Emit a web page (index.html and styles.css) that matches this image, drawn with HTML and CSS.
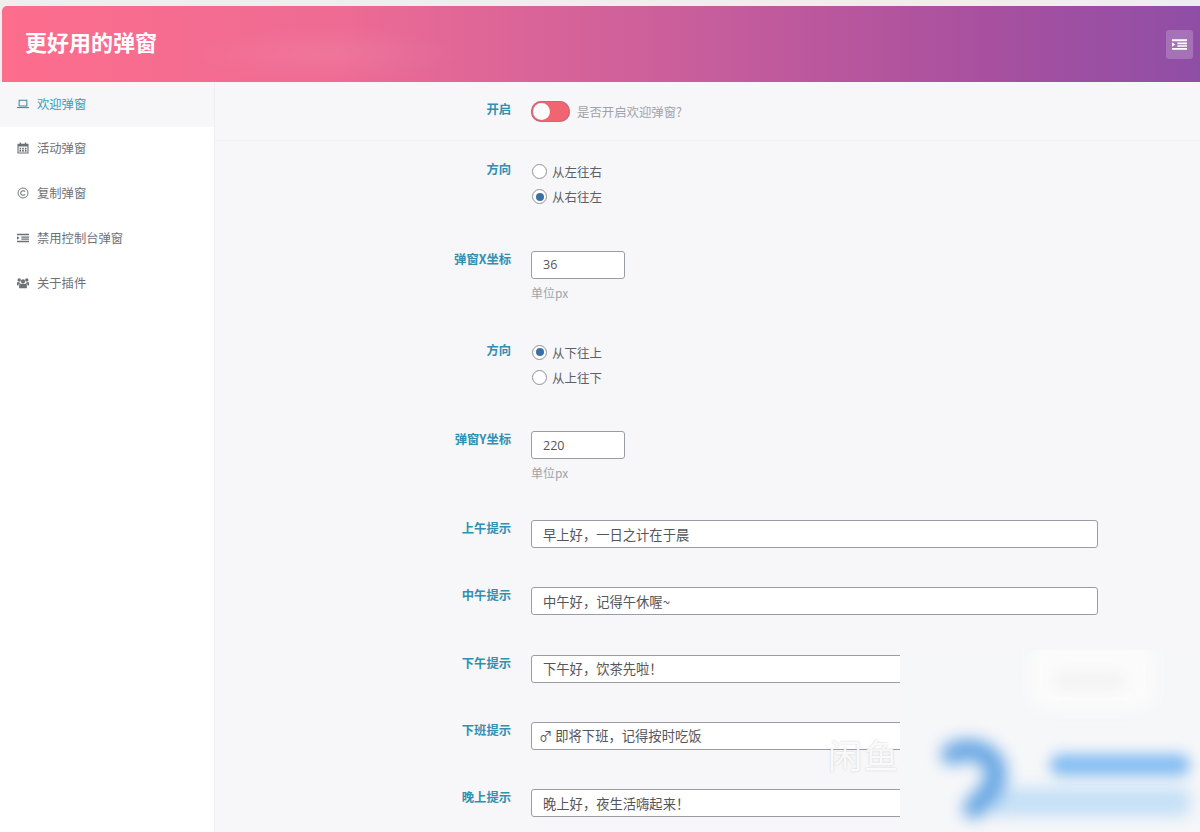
FILE: index.html
```html
<!DOCTYPE html>
<html lang="zh-CN">
<head>
<meta charset="utf-8">
<title>更好用的弹窗</title>
<link rel="stylesheet" href="styles.css">
</head>
<body>
<div class="app">
  <header class="header">
    <div class="header-glow"></div>
    <h1 class="title">更好用的弹窗</h1>
    <button class="menu-btn" aria-label="菜单">
      <svg viewBox="0 0 14 10" width="15" height="11"><path fill="#fff" d="M0 0h14v2H0zM5 3.200h9v1.500H5zM5 5.600h9v1.500H5zM0 8.200h14V10H0zM0 3l3 2-3 2z"/></svg>
    </button>
  </header>
  <div class="body">
    <nav class="sidebar">
      <a class="nav-item active">
        <svg class="nav-icon" viewBox="0 0 14 12"><path fill="none" stroke="currentColor" stroke-width="1.2" d="M2.500 1.600h9v6.800h-9z"/><path fill="currentColor" d="M0 9.600h14v1.200H0z"/></svg>
        <span>欢迎弹窗</span>
      </a>
      <a class="nav-item">
        <svg class="nav-icon" viewBox="0 0 13 13"><path fill="currentColor" fill-rule="evenodd" d="M.5 2H3V.5h1.500V2h4V.5H10V2h2.500v10.500H.5zM1.700 5v6.300h9.600V5zM2.700 6.200h1.800v1.800H2.700zM5.600 6.200h1.800v1.800H5.600zM8.500 6.200h1.800v1.800H8.500zM2.700 8.800h1.800v1.800H2.700zM5.600 8.800h1.800v1.800H5.600zM8.500 8.800h1.800v1.800H8.500z"/></svg>
        <span>活动弹窗</span>
      </a>
      <a class="nav-item">
        <svg class="nav-icon" viewBox="0 0 14 14"><circle cx="7" cy="7" r="5.800" fill="none" stroke="currentColor" stroke-width="1.100"/><path fill="none" stroke="currentColor" stroke-width="1.200" d="M9.200 5.400A2.700 2.700 0 1 0 9.200 8.600"/></svg>
        <span>复制弹窗</span>
      </a>
      <a class="nav-item">
        <svg class="nav-icon" viewBox="0 0 14 10"><path fill="currentColor" d="M0 0h14v1.800H0zM5 3.200h9v1.500H5zM5 5.600h9v1.500H5zM0 8.200h14V10H0zM0 3l3 2-3 2z"/></svg>
        <span>禁用控制台弹窗</span>
      </a>
      <a class="nav-item">
        <svg class="nav-icon" viewBox="0 0 14 12"><path fill="currentColor" d="M7 1.500a2.500 2.500 0 1 1 0 5a2.500 2.500 0 0 1 0-5zM2.600 .6a2 2 0 1 1 0 4a2 2 0 0 1 0-4zM11.400 .6a2 2 0 1 1 0 4a2 2 0 0 1 0-4zM3.800 6.800h6.400c.9 0 1.300.7 1.300 1.600V12h-9V8.400c0-.9.400-1.600 1.300-1.600zM0 5h2.800c.3.800.5 1.200 1 1.500C2.400 6.800 1.500 7.500 1.500 9H0zM11.200 5H14v4h-1.500c0-1.500-.9-2.200-2.300-2.500c.5-.3.700-.7 1-1.500z"/></svg>
        <span>关于插件</span>
      </a>
    </nav>
    <main class="main">
      <div class="row row-switch">
        <label class="label">开启</label>
        <div class="switch-wrap">
          <span class="switch"><span class="knob"></span></span>
          <span class="hint-inline">是否开启欢迎弹窗?</span>
        </div>
      </div>
      <div class="form">
        <div class="row">
          <label class="label label-radio">方向</label>
          <div class="radios">
            <div class="radio"><span class="dot"></span>从左往右</div>
            <div class="radio"><span class="dot checked"></span>从右往左</div>
          </div>
        </div>
        <div class="row">
          <label class="label">弹窗X坐标</label>
          <div>
            <input class="input input-short" value="36">
            <p class="help">单位px</p>
          </div>
        </div>
        <div class="row">
          <label class="label label-radio">方向</label>
          <div class="radios">
            <div class="radio"><span class="dot checked"></span>从下往上</div>
            <div class="radio"><span class="dot"></span>从上往下</div>
          </div>
        </div>
        <div class="row">
          <label class="label">弹窗Y坐标</label>
          <div>
            <input class="input input-short" value="220">
            <p class="help">单位px</p>
          </div>
        </div>
        <div class="row">
          <label class="label">上午提示</label>
          <input class="input input-long" value="早上好，一日之计在于晨">
        </div>
        <div class="row">
          <label class="label">中午提示</label>
          <input class="input input-long" value="中午好，记得午休喔~">
        </div>
        <div class="row">
          <label class="label">下午提示</label>
          <input class="input input-long" value="下午好，饮茶先啦！">
        </div>
        <div class="row">
          <label class="label">下班提示</label>
          <input class="input input-long input-emoji" value="♂ 即将下班，记得按时吃饭">
        </div>
        <div class="row">
          <label class="label">晚上提示</label>
          <input class="input input-long" value="晚上好，夜生活嗨起来！">
        </div>
      </div>
    </main>
  </div>
  <div class="mark-text">闲鱼</div>
  <div class="patch">
    <div class="blob-white"></div>
    <div class="blob-grey"></div>
    <div class="blob-sub"></div>
    <svg class="blob-logo" viewBox="0 0 80 84" width="80" height="84"><path fill="none" stroke="#5a9fe2" stroke-width="22" stroke-linecap="round" d="M14 16C34 6 58 16 58 36C58 50 46 60 36 70"/></svg>
    <div class="blob-bar"></div>
  </div>
</div>
</body>
</html>
```
FILE: styles.css
```css
* { box-sizing: border-box; }
html, body { margin: 0; padding: 0; }
body {
  width: 1200px;
  height: 832px;
  overflow: hidden;
  background: #efeded;
  font-family: "Noto Sans CJK SC", "Open Sans", sans-serif;
  color: #555;
}
.app {
  position: relative;
  width: 1200px;
  height: 832px;
  padding-top: 6px;
  display: flex;
  flex-direction: column;
  overflow: hidden;
}
.header {
  position: relative;
  height: 76px;
  flex: none;
  margin-left: 2px;
  border-radius: 5px 0 0 0;
  background: linear-gradient(90deg, #fd6d8c 0%, #ee6b94 28%, #cc5f9b 55%, #a8509f 82%, #8f4ea6 100%);
  display: flex;
  align-items: center;
  justify-content: space-between;
  padding: 0 7px 0 23px;
  overflow: hidden;
}
.header-glow {
  position: absolute;
  left: 190px;
  top: 20px;
  width: 270px;
  height: 56px;
  background: radial-gradient(closest-side, rgba(255, 255, 255, .07), rgba(255, 255, 255, 0));
}
.title {
  position: relative;
  margin: 0 0 6px;
  font-size: 22px;
  font-weight: 700;
  line-height: 30px;
  color: #fff;
}
.menu-btn {
  position: relative;
  width: 27px;
  height: 29px;
  padding: 0;
  border: 0;
  border-radius: 3px;
  background: rgba(255, 255, 255, .2);
  display: flex;
  align-items: center;
  justify-content: center;
}
.body {
  flex: 1;
  display: flex;
  min-height: 0;
}
.sidebar {
  width: 215px;
  flex: none;
  background: #fff;
  border-right: 1px solid #eef0f3;
  padding-left: 2px;
}
.nav-item {
  height: 45px;
  display: flex;
  align-items: center;
  gap: 8px;
  padding: 0 0 4px 15px;
  font-size: 12.300px;
  color: #6d7176;
}
.nav-item.active {
  margin-left: -2px;
  padding: 0 0 2px 17px;
  color: #2f9fb8;
  background: #f7f7fa;
}
.nav-icon {
  width: 12px;
  height: 12px;
  flex: none;
}
.active .nav-icon { color: #3d84a8; }
.main {
  flex: 1;
  background: #f7f7fa;
  min-width: 0;
}
.row {
  display: grid;
  grid-template-columns: 296px 1fr;
  column-gap: 20px;
  align-items: start;
}
.row-switch {
  height: 59px;
  padding-top: 19px;
  border-bottom: 1px solid #f0f1f3;
}
.form {
  display: flex;
  flex-direction: column;
  padding-top: 18px;
  gap: 39.300px;
}
.label {
  font-size: 12.300px;
  font-weight: 700;
  line-height: 16px;
  text-align: right;
  color: #2f90b2;
}
.label-radio { padding-top: 2px; }
.switch-wrap {
  display: flex;
  align-items: center;
  gap: 7px;
  height: 21px;
}
.switch {
  width: 39px;
  height: 21px;
  padding: 2px;
  border-radius: 11px;
  background: #f0656f;
  box-shadow: inset 0 0 0 1px #c4687a;
  display: block;
}
.knob {
  display: block;
  width: 17px;
  height: 17px;
  border-radius: 50%;
  background: #fdfdfd;
}
.hint-inline {
  font-size: 12.400px;
  color: #a0a3a8;
}
.radios {
  display: flex;
  flex-direction: column;
  padding-bottom: 2.500px;
}
.radio {
  height: 25px;
  display: flex;
  align-items: center;
  gap: 5px;
  padding-left: 1px;
  font-size: 12.500px;
  color: #5c6066;
}
.dot {
  width: 15px;
  height: 15px;
  border-radius: 50%;
  border: 1px solid #8f9296;
  background: #fff;
  display: flex;
  align-items: center;
  justify-content: center;
}
.dot.checked::after {
  content: "";
  width: 8px;
  height: 8px;
  border-radius: 50%;
  background: #3b70a5;
}
.input {
  display: block;
  height: 28px;
  padding: 0 11px;
  border: 1px solid #999ca0;
  border-radius: 3px;
  background: #fff;
  font-family: "Noto Sans CJK SC", "Open Sans", sans-serif;
  font-size: 13.300px;
  color: #53565b;
  outline: none;
}
.input-short { width: 94px; font-family: "Open Sans", "Noto Sans CJK SC", sans-serif; font-size: 12.500px; }
.input-long { width: 567px; }
.input-emoji { padding-left: 7px; }
.help {
  margin: 6px 0 0;
  font-size: 12px;
  line-height: 15.400px;
  color: #a0a3a8;
}
.mark-text {
  position: absolute;
  left: 828px;
  top: 732px;
  font-size: 34px;
  line-height: 46px;
  letter-spacing: 2px;
  color: rgba(255, 255, 255, .88);
  text-shadow: 0 0 2px rgba(120, 120, 120, .35);
}
.patch {
  position: absolute;
  left: 900px;
  top: 650px;
  right: 0;
  bottom: 0;
  background: #f6f7f9;
  overflow: hidden;
}
.blob-white {
  position: absolute;
  left: 130px;
  top: -8px;
  width: 125px;
  height: 68px;
  border-radius: 16px;
  background: #fbfbfb;
  filter: blur(8px);
}
.blob-grey {
  position: absolute;
  left: 155px;
  top: 22px;
  width: 70px;
  height: 18px;
  border-radius: 9px;
  background: #f3f3f4;
  filter: blur(6px);
}
.blob-logo {
  position: absolute;
  left: 38px;
  top: 88px;
  opacity: .9;
  filter: blur(8px);
}
.blob-bar {
  position: absolute;
  left: 150px;
  top: 104px;
  width: 140px;
  height: 22px;
  border-radius: 10px;
  background: #84bdf2;
  filter: blur(7px);
}
.blob-sub {
  position: absolute;
  left: 90px;
  top: 138px;
  width: 200px;
  height: 28px;
  border-radius: 8px;
  background: #c4dff6;
  filter: blur(8px);
}
```
